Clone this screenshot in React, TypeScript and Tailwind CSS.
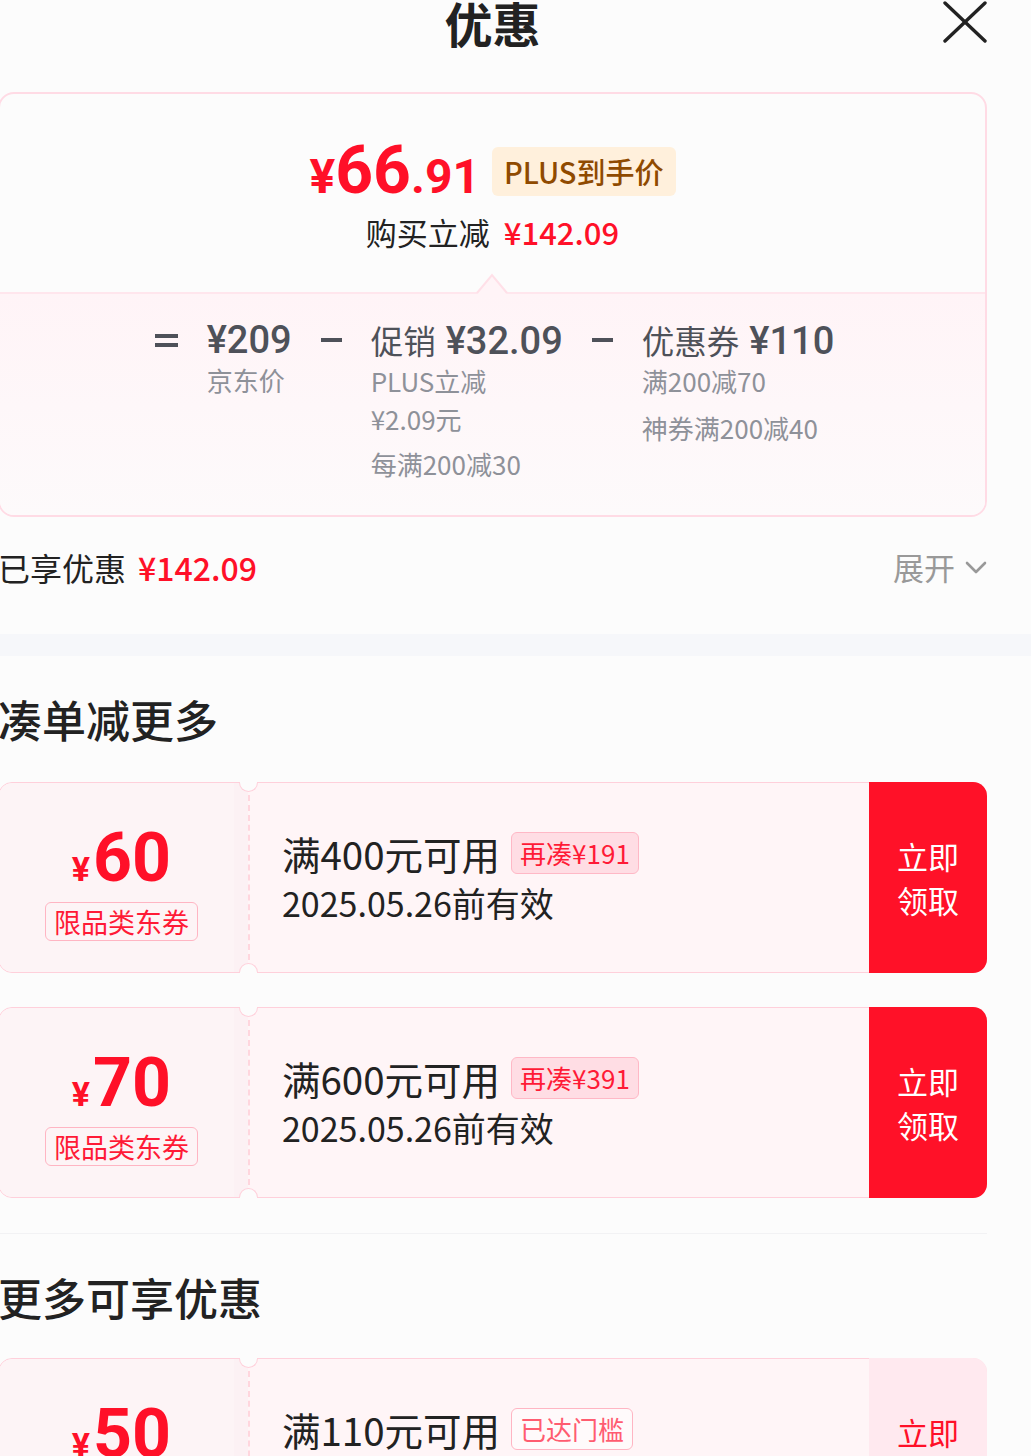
import React from "react";

const RED = "text-[#ff1028]";

function Notch({ pos }: { pos: "top" | "bottom" }) {
  return (
    <div
      className={
        pos === "top"
          ? "absolute left-[240px] top-[-1px] h-[10px] w-[19px] rounded-b-full border border-t-0 border-[#ffd0db] bg-[#fcfcfc]"
          : "absolute left-[240px] bottom-[-1px] h-[10px] w-[19px] rounded-t-full border border-b-0 border-[#ffd0db] bg-[#fcfcfc]"
      }
    />
  );
}

type CouponProps = {
  amount: string;
  cond: string;
  tag: string;
  reached?: boolean;
};

function Coupon({ amount, cond, tag, reached }: CouponProps) {
  return (
    <div className="relative flex h-[191px] rounded-[14px] border border-[#ffd0db] bg-[#fff5f7]">
      <div className="flex w-[235px] flex-col items-center justify-center rounded-l-[14px] bg-[#fdf4f6] pl-[10px] pt-[14px]">
        <div className={`flex items-baseline font-['Roboto'] font-bold ${RED}`}>
          <span className="mr-[3px] text-[34px] leading-none">¥</span>
          <span className="text-[68px] leading-[60px]">{amount}</span>
        </div>
        <div className="mt-[14px] rounded-[6px] border border-[#ffb5c3] px-[8px] text-[27px] leading-[37px] text-[#ff1a36]">
          限品类东券
        </div>
      </div>
      <div className="w-[14px] bg-[#fcf1f4]" />
      <div className="my-[12px] border-l-2 border-dashed border-[#ffd6de]" />
      <div className="flex flex-1 flex-col justify-center pl-[32px] text-[#222]">
        <div className="flex items-center gap-[11px]">
          <span className="text-[38.5px] leading-[44px]">{cond}</span>
          {reached ? (
            <span className="rounded-[6px] border border-[#ffb5c3] bg-[#fffafb] px-[8px] text-[26px] leading-[40px] text-[#ff5c70]">
              {tag}
            </span>
          ) : (
            <span className="rounded-[6px] border border-[#ffb8c6] bg-[#ffdde4] px-[8px] text-[26px] leading-[40px] text-[#ff1a36]">
              {tag}
            </span>
          )}
        </div>
        <div className="mt-[6px] text-[34px] leading-[44px]">2025.05.26前有效</div>
      </div>
      <div
        className={
          reached
            ? "-my-px -mr-px flex w-[118px] items-center justify-center rounded-r-[14px] bg-[#ffe9ef] text-[31px] leading-[44px] text-[#ff1028]"
            : "-my-px -mr-px flex w-[118px] items-center justify-center rounded-r-[14px] bg-[#ff1128] text-[31px] leading-[44px] text-white"
        }
      >
        <div className="text-center">
          立即
          <br />
          领取
        </div>
      </div>
      <Notch pos="top" />
      <Notch pos="bottom" />
    </div>
  );
}

function Bar({ w }: { w: number }) {
  return <div className={w === 23 ? "h-[4px] w-[23px] bg-[#4e5159]" : "h-[4px] w-[21px] bg-[#4e5159]"} />;
}

function Amount({ label, value }: { label?: string; value: string }) {
  return (
    <div className="flex items-baseline gap-[10px] text-[32.5px] leading-[42px]">
      {label && <span>{label}</span>}
      <span className="font-['Roboto'] text-[38px] font-medium">{value}</span>
    </div>
  );
}

export default function App() {
  return (
    <div className="h-[1456px] w-[1031px] overflow-hidden bg-[#fcfcfc] font-['Noto_Sans_CJK_SC','Noto_Sans',sans-serif]">
      <div className="-ml-[2px] w-[989px]">
        {/* header */}
        <div className="relative flex h-[44px] items-center justify-center">
          <div className="text-[48px] font-bold leading-none text-[#222]">优惠</div>
          <svg
            className="absolute right-0 top-[1px]"
            width="44"
            height="42"
            viewBox="0 0 44 42"
            fill="none"
            stroke="#222"
            strokeWidth="3.4"
            strokeLinecap="round"
          >
            <line x1="2" y1="2" x2="42" y2="40" />
            <line x1="42" y1="2" x2="2" y2="40" />
          </svg>
        </div>

        {/* price card */}
        <div className="mt-[48px] overflow-hidden rounded-[16px] border-2 border-[#ffdbe5]">
          <div className="flex h-[198px] flex-col items-center pt-[52px]">
            <div className="flex items-center gap-[12px]">
              <div className={`flex items-baseline font-['Roboto'] font-bold ${RED}`}>
                <span className="text-[48px] leading-[50px]">¥</span>
                <span className="text-[66px] leading-[50px]">66</span>
                <span className="text-[48px] leading-[50px]">.91</span>
              </div>
              <div className="-mt-[6px] rounded-[6px] bg-[#fff0dc] px-[12px] text-[29px] font-medium leading-[49px] text-[#8f4a00]">
                PLUS到手价
              </div>
            </div>
            <div className="mt-[10px] flex items-center gap-[14px] text-[31px] leading-[40px]">
              <span className="text-[#222]">购买立减</span>
              <span className={`font-medium ${RED}`}>¥142.09</span>
            </div>
          </div>
          <div className="relative border-t-2 border-[#ffe6ed] bg-gradient-to-b from-[#fff4f7] to-[#fdfafb] pb-[32px] pt-[25px]">
            <svg
              className="absolute left-[476px] top-[-21px]"
              width="32"
              height="21"
              viewBox="0 0 32 21"
            >
              <polygon points="1,21 16,2 31,21" fill="#fff4f7" />
              <polyline points="1,20 16,2 31,20" fill="none" stroke="#ffe0e8" strokeWidth="2" />
            </svg>
            <div className="flex justify-center gap-[29px] pl-[4px] text-[#4e5159]">
              <div className="flex h-[42px] flex-col justify-center gap-[5px]">
                <Bar w={23} />
                <Bar w={23} />
              </div>
              <div>
                <Amount value="¥209" />
                <div className="text-[26px] leading-[38px] text-[#8e9199]">京东价</div>
              </div>
              <div className="flex h-[42px] items-center">
                <Bar w={21} />
              </div>
              <div>
                <Amount label="促销" value="¥32.09" />
                <div className="flex flex-col gap-[7px] text-[26px] leading-[38px] text-[#8e9199]">
                  <div>
                    PLUS立减
                    <br />
                    ¥2.09元
                  </div>
                  <div>每满200减30</div>
                </div>
              </div>
              <div className="flex h-[42px] items-center">
                <Bar w={21} />
              </div>
              <div>
                <Amount label="优惠券" value="¥110" />
                <div className="flex flex-col gap-[9px] text-[26px] leading-[38px] text-[#8e9199]">
                  <div>满200减70</div>
                  <div>神券满200减40</div>
                </div>
              </div>
            </div>
          </div>
        </div>

        {/* enjoyed */}
        <div className="mt-[28px] flex h-[44px] items-center justify-between">
          <div className="flex items-center gap-[12px] text-[32px]">
            <span className="text-[#222]">已享优惠</span>
            <span className={`font-medium ${RED}`}>¥142.09</span>
          </div>
          <div className="flex items-center gap-[10px] text-[31px] text-[#999]">
            <span>展开</span>
            <svg width="22" height="13" viewBox="0 0 22 13" fill="none" stroke="#999" strokeWidth="2.6" strokeLinecap="round" strokeLinejoin="round">
              <polyline points="2,2 11,11 20,2" />
            </svg>
          </div>
        </div>
      </div>

      <div className="mt-[45px] h-[22px] bg-[#f6f7fa]" />

      <div className="-ml-[2px] w-[989px]">
        {/* 凑单减更多 */}
        <div className="mt-[33px] text-[44px] font-medium leading-[60px] text-[#222]">凑单减更多</div>
        <div className="mt-[33px] flex flex-col gap-[34px]">
          <Coupon amount="60" cond="满400元可用" tag="再凑¥191" />
          <Coupon amount="70" cond="满600元可用" tag="再凑¥391" />
        </div>

        <div className="mt-[35px] h-px bg-[#f2f2f4]" />

        {/* 更多可享优惠 */}
        <div className="mt-[33px] text-[44px] font-medium leading-[60px] text-[#222]">更多可享优惠</div>
        <div className="mt-[31px]">
          <Coupon amount="50" cond="满110元可用" tag="已达门槛" reached />
        </div>
      </div>
    </div>
  );
}
